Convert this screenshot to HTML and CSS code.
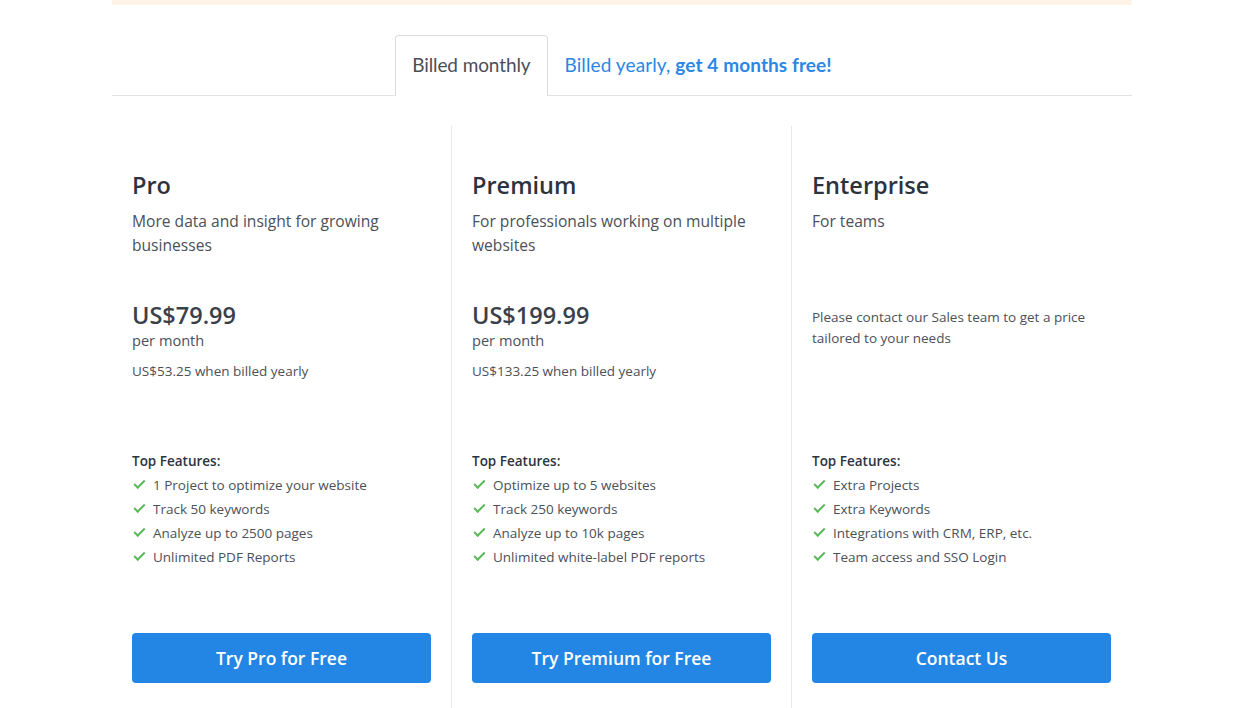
FILE: index.html
```html
<!DOCTYPE html>
<html>
<head>
<meta charset="utf-8">
<link rel="stylesheet" href="styles.css">
</head>
<body>
<div class="page">
  <div class="topbar"></div>
  <div class="tabs">
    <div class="tab active">Billed monthly</div>
    <div class="tab link">Billed yearly, <b>get 4 months free!</b></div>
  </div>
  <div class="plans">
    <div class="plan">
      <div class="head">
        <h2>Pro</h2>
        <p class="desc">More data and insight for growing businesses</p>
      </div>
      <div class="price">
        <div class="amount">US$79.99</div>
        <div class="per">per month</div>
        <div class="yearly">US$53.25 when billed yearly</div>
      </div>
      <div class="features">
        <div class="ftitle">Top Features:</div>
        <ul>
          <li><span class="check"></span>1 Project to optimize your website</li>
          <li><span class="check"></span>Track 50 keywords</li>
          <li><span class="check"></span>Analyze up to 2500 pages</li>
          <li><span class="check"></span>Unlimited PDF Reports</li>
        </ul>
      </div>
      <a class="btn">Try Pro for Free</a>
    </div>
    <div class="plan">
      <div class="head">
        <h2>Premium</h2>
        <p class="desc">For professionals working on multiple websites</p>
      </div>
      <div class="price">
        <div class="amount">US$199.99</div>
        <div class="per">per month</div>
        <div class="yearly">US$133.25 when billed yearly</div>
      </div>
      <div class="features">
        <div class="ftitle">Top Features:</div>
        <ul>
          <li><span class="check"></span>Optimize up to 5 websites</li>
          <li><span class="check"></span>Track 250 keywords</li>
          <li><span class="check"></span>Analyze up to 10k pages</li>
          <li><span class="check"></span>Unlimited white-label PDF reports</li>
        </ul>
      </div>
      <a class="btn">Try Premium for Free</a>
    </div>
    <div class="plan">
      <div class="head">
        <h2>Enterprise</h2>
        <p class="desc">For teams</p>
      </div>
      <div class="price contact-wrap">
        <p class="contact">Please contact our Sales team to get a price tailored to your needs</p>
      </div>
      <div class="features">
        <div class="ftitle">Top Features:</div>
        <ul>
          <li><span class="check"></span>Extra Projects</li>
          <li><span class="check"></span>Extra Keywords</li>
          <li><span class="check"></span>Integrations with CRM, ERP, etc.</li>
          <li><span class="check"></span>Team access and SSO Login</li>
        </ul>
      </div>
      <a class="btn">Contact Us</a>
    </div>
  </div>
</div>
</body>
</html>
```

FILE: styles.css
```css
html, body {
  margin: 0;
  padding: 0;
  background: #fff;
}
body {
  font-family: "Open Sans", "Liberation Sans", sans-serif;
  color: #333a44;
}
.page {
  width: 1020px;
  margin-left: 112px;
}
.topbar {
  height: 5px;
  background: #fdf3e6;
}
.tabs {
  margin-top: 30px;
  display: flex;
  justify-content: center;
  border-bottom: 1px solid #e2e2e2;
  height: 60px;
}
.tab {
  font-family: "Lato", "Open Sans", sans-serif;
  font-size: 19px;
  line-height: 58px;
  padding: 0 16px;
  border: 1px solid transparent;
  border-bottom: none;
  border-radius: 4px 4px 0 0;
  height: 60px;
  box-sizing: border-box;
}
.tab.active {
  color: #4a4f57;
  border-color: #dcdcdc;
  background: #fff;
  height: 61px;
  letter-spacing: -0.1px;
}
.tab.link {
  color: #2b87e3;
  letter-spacing: 0.1px;
}
.tab.link b {
  font-weight: 700;
}
.plans {
  margin-top: 30px;
  display: grid;
  grid-template-columns: 340px 340px 340px;
}
.plan {
  padding: 44px 20px 25px;
  border-right: 1px solid #e8e8e8;
}
.plan:last-child {
  border-right: none;
}
.head {
  height: 131px;
}
h2 {
  margin: 0;
  font-size: 23.5px;
  line-height: 30px;
  font-weight: 600;
  color: #2d333d;
}
.desc {
  margin: 9px 0 0;
  font-size: 15.6px;
  line-height: 24px;
  color: #4b5059;
}
.price {
  height: 148px;
}
.contact-wrap {
  padding-top: 6px;
  box-sizing: border-box;
}
.amount {
  font-size: 23.5px;
  line-height: 29px;
  font-weight: 600;
  color: #3a404a;
}
.per {
  font-size: 14.6px;
  line-height: 20px;
  color: #4b5059;
}
.yearly {
  margin-top: 11px;
  font-size: 13.5px;
  line-height: 20px;
  color: #4b5059;
}
.contact {
  margin: 0;
  font-size: 13.5px;
  line-height: 21px;
  color: #4b5059;
}
.features {
  height: 184px;
  font-size: 13.5px;
  line-height: 24px;
}
.ftitle {
  font-weight: 600;
  color: #2d333d;
}
ul {
  list-style: none;
  margin: 0;
  padding: 0;
}
li {
  display: flex;
  align-items: center;
  color: #4b5059;
}
.check {
  display: inline-block;
  width: 9px;
  height: 4px;
  border-left: 2px solid #5cb85c;
  border-bottom: 2px solid #5cb85c;
  transform: rotate(-45deg);
  margin: -4px 8px 0 2px;
  flex: none;
}
.btn {
  display: block;
  height: 50px;
  width: 299px;
  background: #2386e4;
  border-radius: 4px;
  color: #fff;
  font-size: 17.5px;
  font-weight: 600;
  line-height: 50px;
  text-align: center;
}
```
